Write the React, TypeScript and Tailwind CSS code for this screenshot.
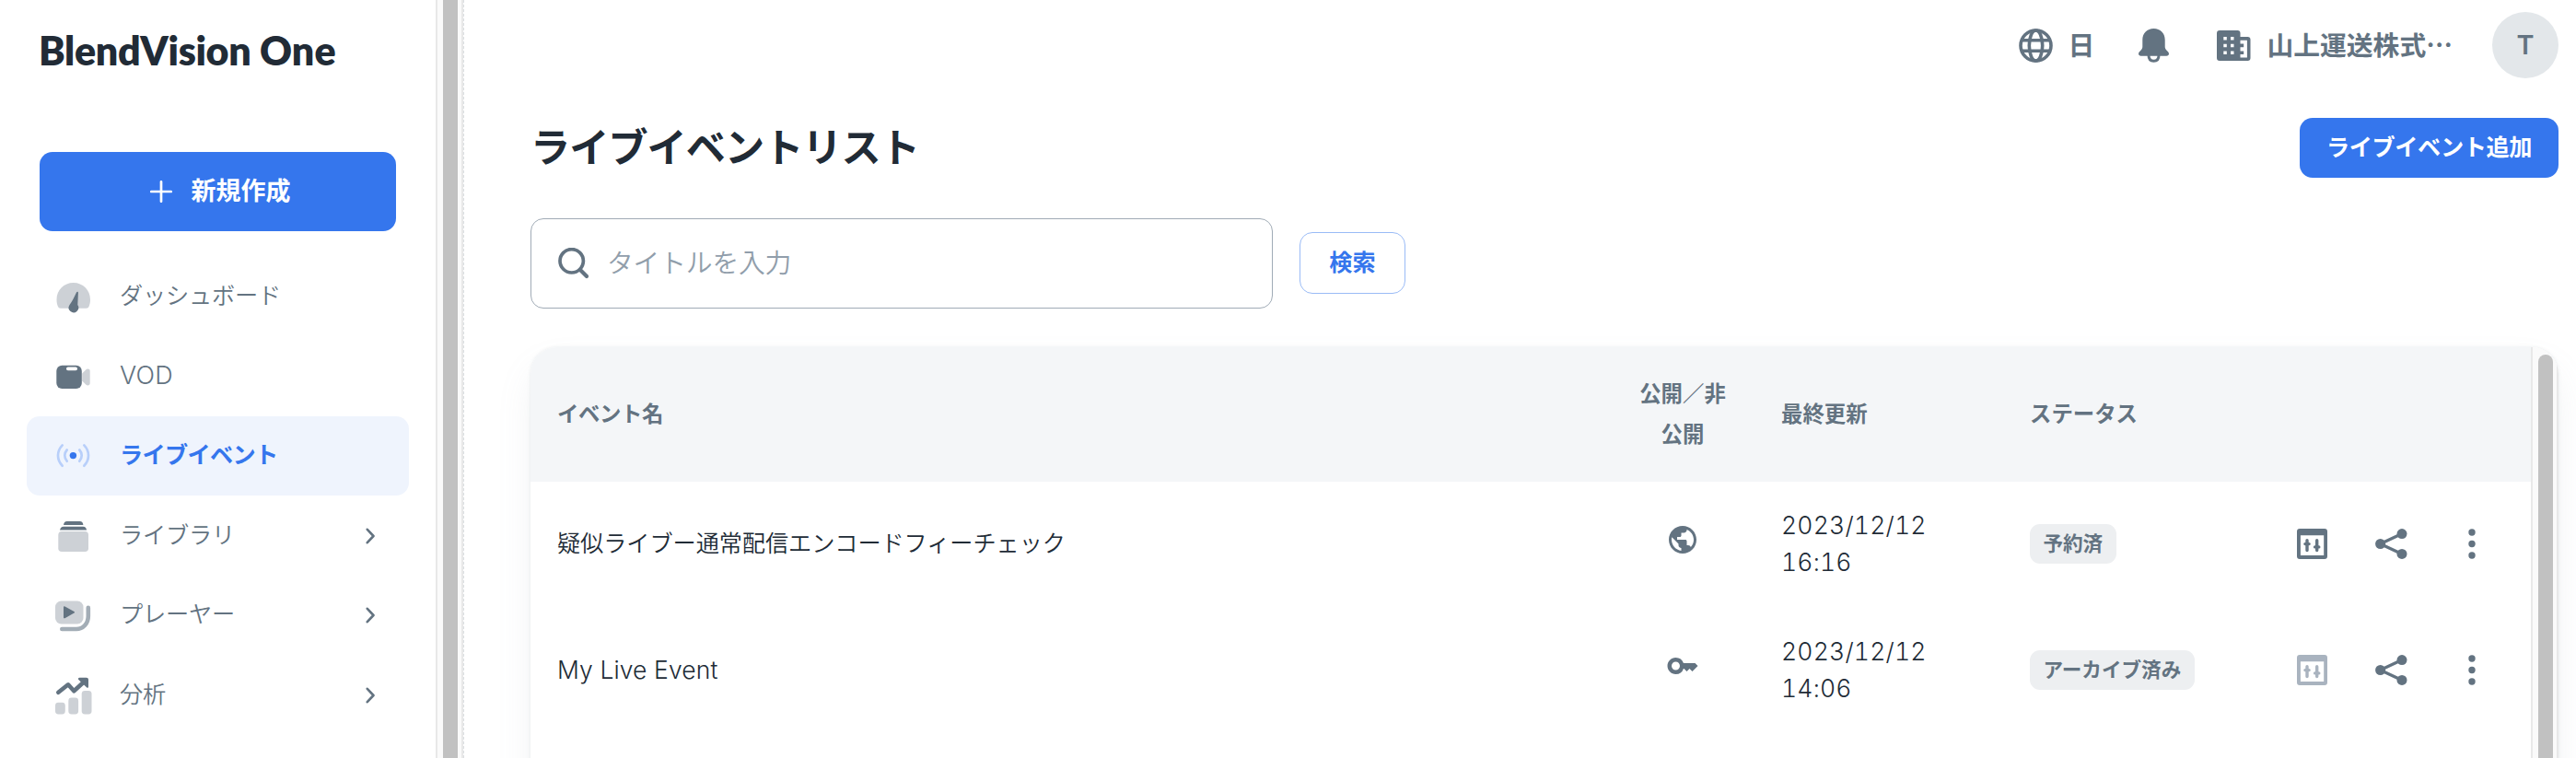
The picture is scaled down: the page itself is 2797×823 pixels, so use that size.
import { clsx } from "clsx";
import React from "react";
import { MdKey, MdPublic } from "react-icons/md";

function DashboardIcon() {
  return (
    <svg viewBox="0 0 40 40" className="w-10 h-10">
      <path
        d="M19.7 5C9.5 5 1.5 13 1.5 23.2c0 2.6.4 4.8 1.2 7 .6 1.7 1.6 2.5 3.3 2.5h27.5c1.7 0 2.7-.8 3.3-2.5.8-2.2 1.2-4.4 1.2-7C38 13 30 5 19.7 5z"
        fill="#cdd1d6"
      />
      <path
        d="M23 15.5c.8-1.2 2-.8 1.9.5l-.6 13a5.3 5.3 0 1 1-8.9.2c2.8-3.6 5.200-8.500 7.600-13.700z"
        fill="#637381"
      />
    </svg>
  );
}

function VodIcon() {
  return (
    <svg viewBox="0 0 40 40" className="w-10 h-10">
      <path
        d="M29.2 16.5l4-4c1.6-1.5 4.5-1.2 4.5 1.5v13c0 2.7-2.9 3-4.500 1.500l-4-4z"
        fill="#cdd1d6"
      />
      <rect x="1.3" y="7.7" width="27.5" height="25.3" rx="6" fill="#637381" />
      <rect x="12" y="9.6" width="12" height="3.6" rx="1.8" fill="#fff" />
    </svg>
  );
}

function LiveIcon() {
  return (
    <svg viewBox="0 0 40 40" className="w-10 h-10" fill="none">
      <circle cx="19.4" cy="19.6" r="3.7" fill="#3576ed" />
      <g stroke="#b8cffa" strokeWidth="2.7" strokeLinecap="round">
        <path d="M7.7 8.4c-6.3 6.5-6.3 15.9 0 22.4" />
        <path d="M31.3 8.4c6.3 6.5 6.3 15.9 0 22.4" />
        <path d="M12.7 13.5c-3.2 3.6-3.2 8.6 0 12.2" />
        <path d="M26.3 13.5c3.2 3.6 3.2 8.6 0 12.2" />
      </g>
    </svg>
  );
}

function LibraryIcon() {
  return (
    <svg viewBox="0 0 40 40" className="w-10 h-10">
      <path d="M9 8c.3-2.5 1.5-4 3.7-4h14c2.2 0 3.4 1.5 3.7 4z" fill="#637381" />
      <path d="M5 13.6c.5-2.4 1.8-3.8 4-3.8h21.3c2.2 0 3.4 1.4 3.8 3.8z" fill="#637381" />
      <rect x="3.3" y="15" width="32.7" height="22" rx="3.8" fill="#cdd1d6" />
    </svg>
  );
}

function PlayerIcon() {
  return (
    <svg viewBox="0 0 40 40" className="w-10 h-10" fill="none">
      <rect x="0" y="4.5" width="30.5" height="25" rx="6.5" fill="#cdd1d6" />
      <path
        d="M9 11.2c0-1 .7-1.2 1.5-.8l10 5.5c.8.5.8 1.3 0 1.7l-10 5.6c-.8.4-1.5.1-1.5-.8z"
        fill="#637381"
      />
      <path
        d="M35.8 11.8v9.2c0 8-5.5 14-13 14H7.3"
        stroke="#a3adb6"
        strokeWidth="4.6"
        strokeLinecap="round"
      />
    </svg>
  );
}

function AnalysisIcon() {
  return (
    <svg viewBox="0 0 40 40" className="w-10 h-10 overflow-visible" fill="none">
      <rect x="0" y="27.8" width="10.8" height="12.7" rx="3.4" fill="#cdd1d6" />
      <rect x="14.3" y="22.5" width="10.8" height="18" rx="3.4" fill="#cdd1d6" />
      <rect x="28.7" y="15" width="10.8" height="25.5" rx="3.4" fill="#cdd1d6" />
      <path
        d="M3.3 16.8L14 8.3l6.3 6.9L31 5.5"
        stroke="#637381"
        strokeWidth="4.6"
        strokeLinecap="round"
        strokeLinejoin="round"
      />
      <path
        d="M26.5.7h7.2c1.4 0 2.3.9 2.3 2.3v7.5c0 1.5-1 1.7-2 .8l-8.4-8c-1.2-1.1-.8-2.6.9-2.6z"
        fill="#637381"
      />
    </svg>
  );
}

function PlusIcon() {
  return (
    <svg viewBox="0 0 24 24" className="w-6 h-6" fill="none">
      <path d="M12 1.3v21.4M1.3 12h21.4" stroke="#fff" strokeWidth="2.7" strokeLinecap="round" />
    </svg>
  );
}

function ChevronIcon() {
  return (
    <svg viewBox="0 0 10 18" className="w-[10px] h-[18px]" fill="none">
      <path
        d="M1.8 1.8L8.5 9l-6.7 7.2"
        stroke="#637381"
        strokeWidth="2.6"
        strokeLinecap="round"
        strokeLinejoin="round"
      />
    </svg>
  );
}

function SearchIcon() {
  return (
    <svg viewBox="0 0 34 34" className="w-[34px] h-[34px]" fill="none">
      <circle cx="14.7" cy="14.3" r="12.7" stroke="#637381" strokeWidth="3.7" />
      <path d="M24 24l7 7" stroke="#637381" strokeWidth="4.2" strokeLinecap="round" />
    </svg>
  );
}

function GlobeIcon() {
  return (
    <svg viewBox="0 0 37 37" className="w-[37px] h-[37px]" fill="none" stroke="currentColor" strokeWidth="3.6">
      <circle cx="18.5" cy="18.5" r="16.5" />
      <ellipse cx="18.5" cy="18.5" rx="7.2" ry="16.5" />
      <path d="M3 12.8h31M3 24.2h31" />
    </svg>
  );
}

function BellIcon() {
  return (
    <svg viewBox="0 0 33 37" className="w-[33px] h-[37px]" fill="none">
      <path
        d="M16.5 0C9.3 0 4.3 5.2 4.3 12.2v7.3c0 1.8-.6 3-1.9 4.3C1 25.2 0 26.2 0 27.3c0 1.5 1 2.4 2.700 2.400h27.600c1.700 0 2.700-.9 2.700-2.400 0-1.100-1-2.100-2.400-3.500-1.300-1.300-1.900-2.500-1.900-4.300v-7.300C28.700 5.200 23.700 0 16.500 0z"
        fill="currentColor"
      />
      <path d="M11 29c0 4 2.2 6.3 5.5 6.3S22 33 22 29" stroke="currentColor" strokeWidth="3" />
    </svg>
  );
}

function BuildingIcon() {
  return (
    <svg viewBox="0 0 37 33" className="w-[37px] h-[33px]">
      <path
        fill="currentColor"
        fillRule="evenodd"
        d="M3 0h19.5a3 3 0 0 1 3 3v4h8a3 3 0 0 1 3 3v20a3 3 0 0 1-3 3H3a3 3 0 0 1-3-3V3a3 3 0 0 1 3-3zM7.3 7v3.5h3.5V7zM15 7v3.5h3.5V7zM7.3 14.7v3.5h3.5v-3.5zM15 14.7v3.5h3.5v-3.5zM7.3 22.4v3.5h3.5v-3.5zM15 22.4v3.5h3.5v-3.5zM25.5 10.7v3.8h3.700v3.700h-3.700v4.200h3.700v3.700h-3.700v3.300h7.400V10.700z"
      />
    </svg>
  );
}

function ControlRoomIcon({ disabled }: { disabled: boolean }) {
  return (
    <svg
      viewBox="0 0 33 33"
      className={clsx("w-[33px] h-[33px]", disabled ? "text-[#a9b3bf]" : "text-[#637381]")}
      fill="currentColor"
    >
      <path
        fillRule="evenodd"
        d="M3 0h27a3 3 0 0 1 3 3v27a3 3 0 0 1-3 3H3a3 3 0 0 1-3-3V3a3 3 0 0 1 3-3zM3.9 7.2v21.9h25.3V7.2z"
      />
      <path
        d="M11 12.8v10.7M8.9 16.6h4.2M21.7 12.8v10.7M19.6 19.9h4.2"
        stroke="currentColor"
        strokeWidth="3.4"
        strokeLinecap="round"
      />
    </svg>
  );
}

function ShareIcon() {
  return (
    <svg viewBox="0 0 35 33" className="w-[35px] h-[33px]" fill="currentColor">
      <path d="M5.5 16.5L29 5.5M5.5 16.5L29 27.5" stroke="currentColor" strokeWidth="3.4" />
      <circle cx="5.6" cy="16.5" r="5.5" />
      <circle cx="29" cy="5.6" r="5.5" />
      <circle cx="29" cy="27.4" r="5.5" />
    </svg>
  );
}

function MoreIcon() {
  return (
    <svg viewBox="0 0 8 33" className="w-2 h-[33px]" fill="currentColor">
      <circle cx="4" cy="4" r="3.7" />
      <circle cx="4" cy="16.5" r="3.7" />
      <circle cx="4" cy="29" r="3.7" />
    </svg>
  );
}

const navItems = [
  { label: "ダッシュボード", icon: <DashboardIcon /> },
  { label: "VOD", icon: <VodIcon />, latin: true },
  { label: "ライブイベント", icon: <LiveIcon />, active: true },
  { label: "ライブラリ", icon: <LibraryIcon />, expandable: true },
  { label: "プレーヤー", icon: <PlayerIcon />, expandable: true },
  { label: "分析", icon: <AnalysisIcon />, expandable: true },
];

const events = [
  {
    title: "疑似ライブー通常配信エンコードフィーチェック",
    isPublic: true,
    date: "2023/12/12",
    time: "16:16",
    status: "予約済",
    archived: false,
  },
  {
    title: "My Live Event",
    isPublic: false,
    date: "2023/12/12",
    time: "14:06",
    status: "アーカイブ済み",
    archived: true,
  },
];

function Sidebar() {
  return (
    <aside className="w-[473px] shrink-0">
      <div className="h-[110px] pl-[42px] pt-[27px] font-['Lato',sans-serif] font-extrabold text-[43px] leading-[56px] tracking-[-0.35px] text-[#212b36] whitespace-nowrap">
        BlendVision <span className="tracking-[0.2px]">One</span>
      </div>
      <button className="mt-[55px] ml-[43px] w-[387px] h-[86px] pl-[5px] rounded-[14px] bg-[#3576ed] text-white flex items-center justify-center gap-[21px] text-[27px] font-semibold">
        <PlusIcon />
        <span>新規作成</span>
      </button>
      <nav className="mt-[28px] ml-[29px] w-[415px] flex flex-col gap-[0.5px]">
        {navItems.map((item) => (
          <div
            key={item.label}
            className={clsx(
              "h-[86px] rounded-[14px] flex items-center pl-[31px] pr-[37px] text-[25.2px]",
              item.active
                ? "bg-[#eff4fd] text-[#3576ed] font-semibold tracking-[-0.7px]"
                : "text-[#637381] font-[350] tracking-[-0.2px]"
            )}
          >
            {item.icon}
            <span
              className={clsx("ml-[30px] flex-1", {
                "text-[27px] font-light tracking-[0.2px]": item.latin,
              })}
            >
              {item.label}
            </span>
            {item.expandable && <ChevronIcon />}
          </div>
        ))}
      </nav>
    </aside>
  );
}

function Header() {
  return (
    <header className="h-[98px] pt-[13px] pr-[19px] flex justify-end text-[#637381]">
      <div className="h-[72px] flex items-center text-[28.8px] font-semibold font-['Noto_Sans_CJK_JP',sans-serif]">
        <GlobeIcon />
        <span className="ml-[17px] -mt-[2px]">日</span>
        <div className="ml-[48px]">
          <BellIcon />
        </div>
        <div className="ml-[52px]">
          <BuildingIcon />
        </div>
        <span className="ml-[17px] -mt-[3px]">山上運送株式…</span>
        <div className="ml-[43px] w-[72px] h-[72px] rounded-full bg-[#e3e7ea] flex items-center justify-center font-['Inter',sans-serif]">
          T
        </div>
      </div>
    </header>
  );
}

function StatusChip({ label }: { label: string }) {
  return (
    <span className="inline-flex items-center h-[43px] px-[14.4px] rounded-[11px] bg-[#edeff1] text-[#637381] text-[21.6px] font-semibold leading-none whitespace-nowrap">
      {label}
    </span>
  );
}

function EventTable() {
  return (
    <div className="ml-[72px] mr-[19px] h-[500px] rounded-t-[29px] overflow-hidden bg-white flex shadow-[0_0_3.6px_rgba(145,158,171,0.2),0_21.6px_43px_-7px_rgba(145,158,171,0.16)]">
      <div className="flex-1">
        <div className="h-[146px] bg-[#f4f6f8] flex items-center text-[#637381] text-[23.4px] font-semibold leading-[44px]">
          <div className="w-[1201px] pl-[29px] tracking-[-0.4px]">イベント名</div>
          <div className="w-[100px] text-center whitespace-nowrap">
            公開／非
            <br />
            公開
          </div>
          <div className="ml-[57px] w-[270px]">最終更新</div>
          <div>ステータス</div>
        </div>
        <div className="-mt-px">
          {events.map((event) => (
            <div
              key={event.title}
              className="h-[137px] flex items-center text-[#212b36] text-[25.2px] font-[350]"
            >
              <div
                className={clsx("w-[1201px] pl-[29px] tracking-[-0.08px]", {
                  "text-[26.5px] tracking-[0.1px]": event.archived,
                })}
              >
                {event.title}
              </div>
              <div className="w-[100px] flex justify-center text-[#637381] pb-[10px]">
                {event.isPublic ? <MdPublic size={36} /> : <MdKey size={36} />}
              </div>
              <div className="ml-[57px] -mt-[2px] w-[270px] text-[26.5px] leading-[40px] tracking-[0.2px] tabular-nums">
                {event.date}
                <br />
                {event.time}
              </div>
              <div className="w-[290px] flex">
                <StatusChip label={event.status} />
              </div>
              <div className="flex items-center text-[#637381]">
                <ControlRoomIcon disabled={event.archived} />
                <div className="ml-[51.5px]">
                  <ShareIcon />
                </div>
                <div className="ml-[66.5px]">
                  <MoreIcon />
                </div>
              </div>
            </div>
          ))}
        </div>
      </div>
      <div className="w-[30px] shrink-0 bg-[#fafafa] border-x-2 border-[#e8e8e8] pt-[8px] pl-[6px]">
        <div className="w-4 h-[500px] rounded-t-full bg-[#c1c1c1]" />
      </div>
    </div>
  );
}

function App() {
  return (
    <div
      lang="ja"
      className="w-[2797px] h-[823px] overflow-hidden bg-white flex font-['Inter','Noto_Sans_CJK_JP',sans-serif]"
    >
      <Sidebar />
      <div className="w-[30px] shrink-0 bg-[#fafafa] border-x-2 border-[#e8e8e8] pl-[6px]">
        <div className="w-4 h-full bg-[#c1c1c1]" />
      </div>
      <main className="flex-1 border-l border-dashed border-[#dcdfe2]">
        <Header />
        <div className="h-[139px] pl-[72px] pr-[19px] pt-[30px] flex justify-between items-start">
          <h1 className="text-[43.2px] leading-[64px] font-bold tracking-[-1px] text-[#212b36]">
            ライブイベントリスト
          </h1>
          <button className="w-[281px] h-[65px] rounded-[14px] bg-[#3576ed] text-white text-[25.2px] font-semibold tracking-[-0.4px] whitespace-nowrap">
            ライブイベント追加
          </button>
        </div>
        <div className="h-[140px] pl-[72px] flex items-start">
          <div className="w-[806px] h-[98px] rounded-[14px] border border-[#a0abb6] flex items-center pl-[29px]">
            <SearchIcon />
            <span className="ml-[19px] text-[28.8px] font-[350] tracking-[-0.2px] text-[#919eab]">
              タイトルを入力
            </span>
          </div>
          <button className="ml-[29px] mt-[15px] w-[115px] h-[67px] rounded-[14px] border border-[#9abbf6] text-[#3576ed] text-[25.2px] font-bold">
            検索
          </button>
        </div>
        <EventTable />
      </main>
    </div>
  );
}

export default App;
